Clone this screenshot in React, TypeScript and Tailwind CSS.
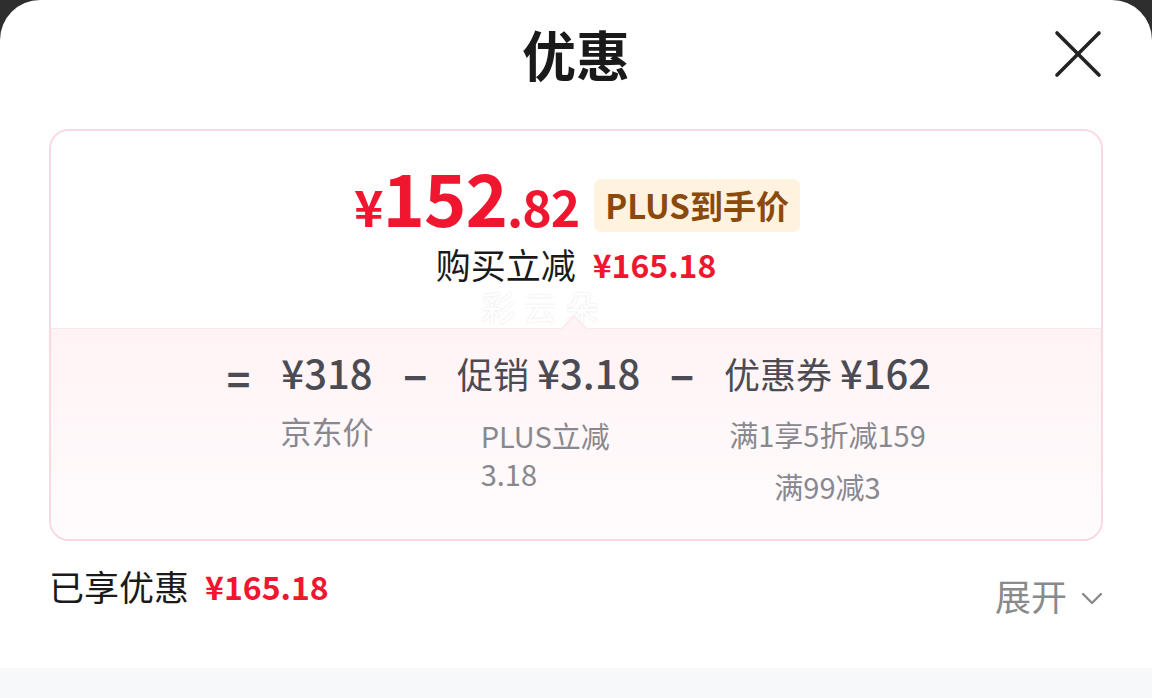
const font = { fontFamily: '"Noto Sans CJK SC", "Noto Sans", sans-serif' };

export default function App() {
  return (
    <div className="w-[1152px] h-[698px] bg-[#2e2e2e] overflow-hidden" style={font}>
      <div className="h-full bg-white rounded-t-[40px] flex flex-col">
        {/* header */}
        <div className="relative h-[108px] flex items-start justify-center">
          <h1 className="text-[54px] font-bold text-[#1a1a1a] leading-none mt-[27px]">优惠</h1>
          <button className="absolute right-[50px] top-[29px] w-[50px] h-[50px] flex items-center justify-center">
            <svg width="50" height="50" viewBox="0 0 50 50" fill="none" stroke="#222" strokeWidth="3.6" strokeLinecap="round">
              <path d="M5 4 L47 46" />
              <path d="M47 4 L5 46" />
            </svg>
          </button>
        </div>

        {/* card */}
        <div className="mx-[49px] mt-[21px] h-[412px] border-2 border-[#f9d9e1] rounded-[20px] overflow-hidden flex flex-col">
          <div className="relative h-[197px] bg-white flex flex-col items-center">
            <div className="flex items-start gap-[15px] mt-[29px] ml-[2px]">
              <div className="flex items-baseline text-[#f0162f] font-bold leading-none tracking-[-1px]">
                <span className="text-[50px]">¥</span>
                <span className="text-[72px]">152</span>
                <span className="text-[50px]">.82</span>
              </div>
              <span className="mt-[19px] bg-[#fff2df] text-[#8a4a0c] text-[33px] font-bold leading-none px-[11px] py-[10px] rounded-[7px]">
                PLUS到手价
              </span>
            </div>
            <div className="flex items-center gap-[17px] mt-[14px] leading-none">
              <span className="text-[35px] text-[#1a1a1a]">购买立减</span>
              <span className="text-[32px] font-bold text-[#f0162f]">¥165.18</span>
            </div>
            <span
              className="absolute left-[430px] top-[159px] text-[34px] text-white tracking-[8px] leading-none"
              style={{ textShadow: '0 0 2px rgba(0,0,0,0.14)' }}
            >
              彩云朵
            </span>
          </div>

          <div className="relative flex-1 bg-gradient-to-b from-[#fff3f5] to-[#fffcfd] border-t border-[#fbe6ea]">
            <div className="absolute left-[514px] top-[-10px] w-[18px] h-[18px] bg-[#fff3f5] rotate-45 border-l border-t border-[#fbe6ea]" />
            <div className="flex justify-center items-start gap-[30px] pt-[21px] pl-[6px] text-[#4b4b53]">
              <span className="text-[40px] font-bold leading-[44px] mt-[6px]">=</span>
              <div className="flex flex-col items-center">
                <span className="text-[40px] font-medium leading-[44px]">¥318</span>
                <span className="text-[31px] text-[#88888f] leading-[36px] mt-[19px]">京东价</span>
              </div>
              <span className="text-[40px] font-bold leading-[44px] mt-[4px]">−</span>
              <div className="flex flex-col items-center">
                <span className="text-[36px] leading-[44px]">
                  促销 <span className="text-[40px] font-medium">¥3.18</span>
                </span>
                <span className="text-[29px] text-[#88888f] leading-[38px] mt-[21px] w-[136px] break-all">PLUS立减3.18</span>
              </div>
              <span className="text-[40px] font-bold leading-[44px] mt-[4px]">−</span>
              <div className="flex flex-col items-center">
                <span className="text-[36px] leading-[44px]">
                  优惠券 <span className="text-[40px] font-medium">¥162</span>
                </span>
                <span className="text-[29px] text-[#88888f] leading-[36px] mt-[21px]">满1享5折减159</span>
                <span className="text-[29px] text-[#88888f] leading-[36px] mt-[16px]">满99减3</span>
              </div>
            </div>
          </div>
        </div>

        {/* footer */}
        <div className="flex justify-between items-start px-[49px] pt-[27px]">
          <div className="flex items-center gap-[16px] leading-none">
            <span className="text-[35px] text-[#1a1a1a]">已享优惠</span>
            <span className="text-[32px] font-bold text-[#f0162f]">¥165.18</span>
          </div>
          <div className="flex items-center gap-[14px] mt-[9px] text-[#8a8a8a] leading-none">
            <span className="text-[36px]">展开</span>
            <svg width="22" height="14" viewBox="0 0 22 14" fill="none" stroke="#8a8a8a" strokeWidth="2.4" strokeLinecap="round" strokeLinejoin="round" className="mt-[8px]">
              <path d="M2 2 L11 11 L20 2" />
            </svg>
          </div>
        </div>

        <div className="mt-auto h-[30px] bg-[#f7f8fa]" />
      </div>
    </div>
  );
}
